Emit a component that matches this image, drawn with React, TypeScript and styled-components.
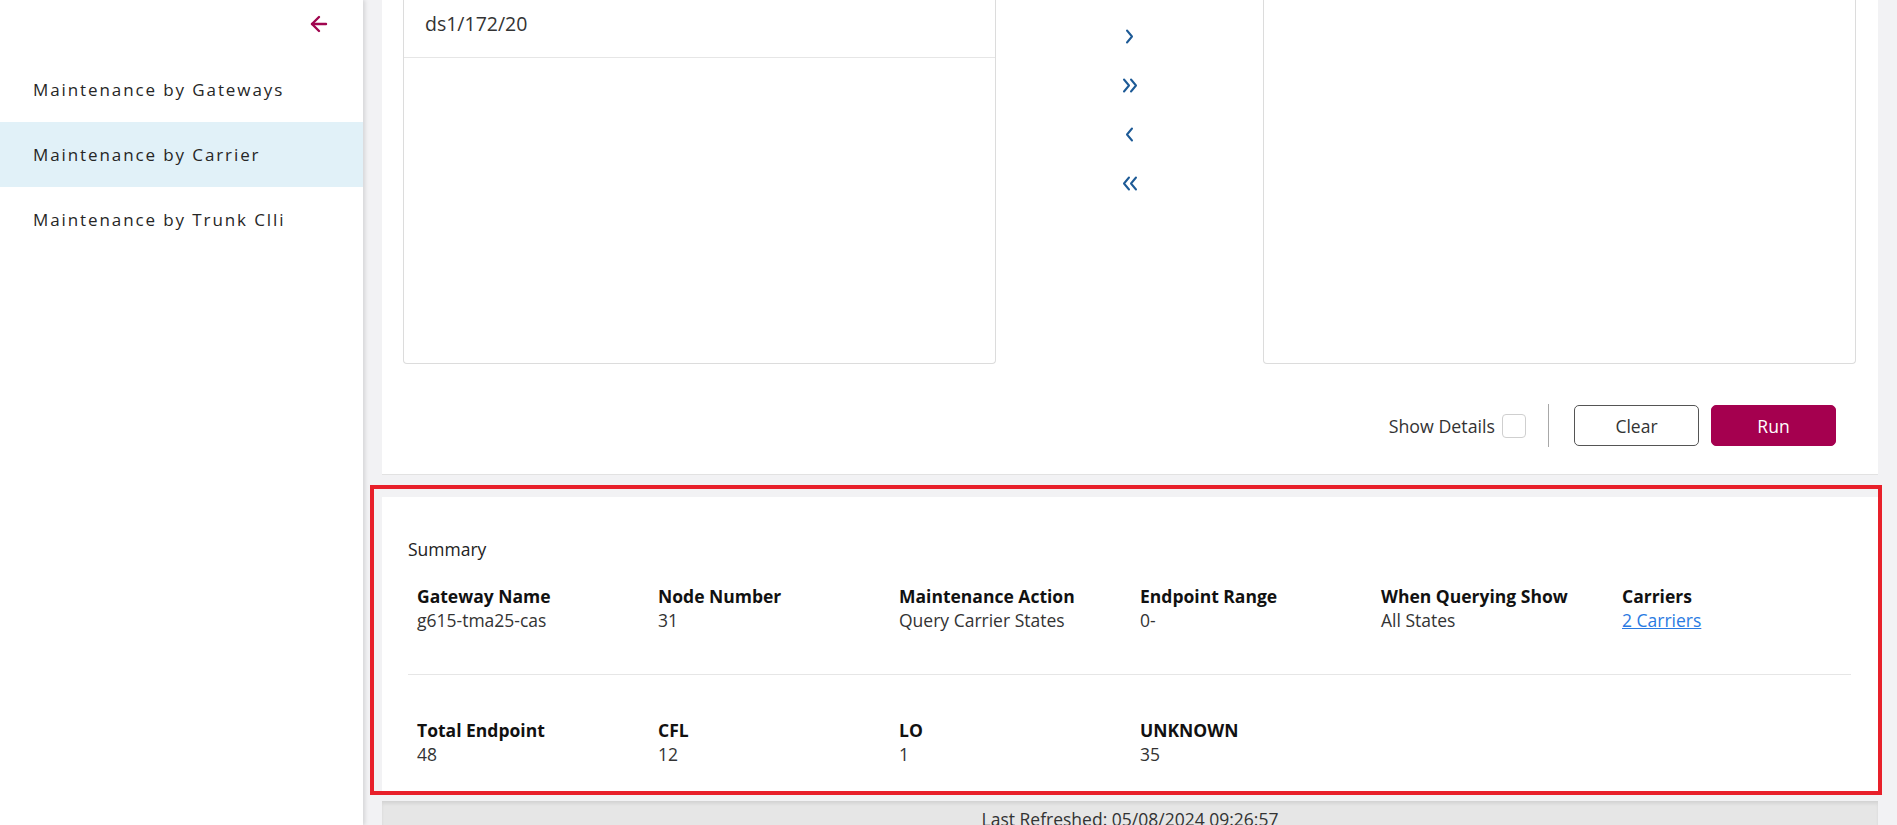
import React from 'react';
import styled, { createGlobalStyle } from 'styled-components';
import { ArrowLeft } from 'lucide-react';

const GlobalStyle = createGlobalStyle`
    html, body {
        margin: 0;
        padding: 0;
    }

    body {
        font-family: "Open Sans", "Liberation Sans", sans-serif;
        color: #333;
        overflow: hidden;
    }

    * {
        box-sizing: border-box;
    }
`;

const Shell = styled.div`
    display: flex;
    width: 1897px;
    height: 825px;
    overflow: hidden;
`;

const Sidebar = styled.aside`
    width: 363px;
    flex-shrink: 0;
    background: #fff;
    box-shadow: 2px 0 4px rgba(0, 0, 0, 0.12);
    z-index: 1;
`;

const BackRow = styled.div`
    height: 57px;
    display: flex;
    justify-content: flex-end;
    align-items: flex-start;
    padding: 12px 32px 0 0;
    color: #a0064f;
`;

const MenuItem = styled.div<{ $active?: boolean }>`
    height: 65px;
    display: flex;
    align-items: center;
    padding-left: 33px;
    font-size: 17px;
    letter-spacing: 1.9px;
    color: #262626;
    background: ${(p) => (p.$active ? '#e1f1f8' : 'transparent')};
`;

const Main = styled.main`
    flex: 1;
    min-width: 0;
    display: flex;
    flex-direction: column;
    padding: 0 19px;
    background: #f2f2f4;
`;

const TopCard = styled.section`
    flex-shrink: 0;
    height: 475px;
    padding: 0 22px 0 21px;
    background: #fff;
    border-bottom: 1px solid #e2e2e2;
`;

const Transfer = styled.div`
    display: flex;
    height: 364px;
`;

const ListBox = styled.div`
    width: 593px;
    background: #fff;
    border: 1px solid #dcdcdc;
    border-top: none;
    border-radius: 0 0 4px 4px;
`;

const ListItem = styled.div`
    height: 58px;
    padding: 10px 0 0 21px;
    font-size: 19.5px;
    line-height: 28px;
    color: #333;
    border-bottom: 1px solid #e6e6e6;
`;

const MoveColumn = styled.div`
    flex: 1;
    display: flex;
    flex-direction: column;
    align-items: center;
    padding-top: 12px;
`;

const MoveButton = styled.button`
    height: 49px;
    width: 40px;
    display: flex;
    align-items: center;
    justify-content: center;
    border: none;
    background: none;
    padding: 0;
    color: #1d5a96;
    cursor: pointer;
`;

const ActionRow = styled.div`
    height: 41px;
    margin-top: 41px;
    padding-right: 20px;
    display: flex;
    justify-content: flex-end;
    align-items: center;
`;

const CheckLabel = styled.label`
    display: flex;
    align-items: center;
    gap: 7px;
    font-size: 17.8px;
    color: #333;
`;

const CheckBox = styled.span`
    width: 24px;
    height: 24px;
    border: 1px solid #cfcfcf;
    border-radius: 4px;
    background: #fff;
`;

const Divider = styled.span`
    width: 1px;
    height: 43px;
    margin: 0 25px 0 22px;
    background: #a8a8a8;
`;

const Button = styled.button<{ $primary?: boolean }>`
    width: 125px;
    height: 41px;
    margin-left: ${(p) => (p.$primary ? '12px' : '0')};
    border-radius: 5px;
    font-family: inherit;
    font-size: 17.5px;
    color: ${(p) => (p.$primary ? '#fff' : '#333')};
    background: ${(p) => (p.$primary ? '#a5004f' : '#fff')};
    border: 1px solid ${(p) => (p.$primary ? '#a5004f' : '#555')};
`;

const Annotated = styled.div`
    margin: 10px -4px 0 -12px;
    padding: 8px 0 0 8px;
    border: 4px solid #e8202a;
`;

const SummaryCard = styled.section`
    height: 294px;
    padding: 40px 27px 0 26px;
    background: #fff;
`;

const SummaryTitle = styled.div`
    font-size: 17.5px;
    line-height: 24px;
    color: #222;
    margin-bottom: 23px;
`;

const FieldGrid = styled.div`
    display: grid;
    grid-template-columns: repeat(6, 241px);
    padding-left: 9px;
`;

const Label = styled.div`
    font-size: 17.5px;
    font-weight: 700;
    line-height: 24px;
    color: #111;
`;

const Value = styled.div`
    font-size: 17.5px;
    line-height: 25px;
    color: #333;
`;

const ValueLink = styled.a`
    color: #2a7ae2;
    text-decoration: underline;
`;

const Separator = styled.hr`
    height: 1px;
    margin: 41px 0 43px;
    border: none;
    background: #e6e6e6;
`;

const Footer = styled.footer`
    flex: 1;
    margin-top: 6px;
    padding-top: 5px;
    text-align: center;
    font-size: 17.5px;
    line-height: 24px;
    color: #333;
    background: #e6e6e6;
    border-top: 1px solid #d4d4d4;
    box-shadow: inset 0 2px 3px rgba(0, 0, 0, 0.07);
`;

const Chevron = ({ dir, double }: { dir: 'left' | 'right'; double?: boolean }) => {
    const one = dir === 'right' ? '2,1.5 7,7.5 2,13.5' : '7,1.5 2,7.5 7,13.5';
    const width = double ? 16 : 9;
    return (
        <svg width={width} height="15" viewBox={`0 0 ${width} 15`} fill="none" stroke="currentColor" strokeWidth="2" strokeLinecap="round" strokeLinejoin="round">
            <polyline points={one} />
            {double && <polyline points={one} transform="translate(7 0)" />}
        </svg>
    );
};

const topFields = [
    { label: 'Gateway Name', value: 'g615-tma25-cas' },
    { label: 'Node Number', value: '31' },
    { label: 'Maintenance Action', value: 'Query Carrier States' },
    { label: 'Endpoint Range', value: '0-' },
    { label: 'When Querying Show', value: 'All States' },
    { label: 'Carriers', value: '2 Carriers', link: true },
];

const countFields = [
    { label: 'Total Endpoint', value: '48' },
    { label: 'CFL', value: '12' },
    { label: 'LO', value: '1' },
    { label: 'UNKNOWN', value: '35' },
];

type Field = { label: string; value: string; link?: boolean };

const Fields = ({ items }: { items: Field[] }) => (
    <FieldGrid>
        {items.map((f) => (
            <div key={f.label}>
                <Label>{f.label}</Label>
                <Value>{f.link ? <ValueLink href="#">{f.value}</ValueLink> : f.value}</Value>
            </div>
        ))}
    </FieldGrid>
);

const App = () => {
    return (
        <Shell>
            <GlobalStyle />
            <Sidebar>
                <BackRow>
                    <ArrowLeft size={24} strokeWidth={2.4} />
                </BackRow>
                <MenuItem>Maintenance by Gateways</MenuItem>
                <MenuItem $active>Maintenance by Carrier</MenuItem>
                <MenuItem>Maintenance by Trunk Clli</MenuItem>
            </Sidebar>
            <Main>
                <TopCard>
                    <Transfer>
                        <ListBox>
                            <ListItem>ds1/172/20</ListItem>
                        </ListBox>
                        <MoveColumn>
                            <MoveButton><Chevron dir="right" /></MoveButton>
                            <MoveButton><Chevron dir="right" double /></MoveButton>
                            <MoveButton><Chevron dir="left" /></MoveButton>
                            <MoveButton><Chevron dir="left" double /></MoveButton>
                        </MoveColumn>
                        <ListBox />
                    </Transfer>
                    <ActionRow>
                        <CheckLabel>
                            Show Details
                            <CheckBox />
                        </CheckLabel>
                        <Divider />
                        <Button>Clear</Button>
                        <Button $primary>Run</Button>
                    </ActionRow>
                </TopCard>
                <Annotated>
                    <SummaryCard>
                        <SummaryTitle>Summary</SummaryTitle>
                        <Fields items={topFields} />
                        <Separator />
                        <Fields items={countFields} />
                    </SummaryCard>
                </Annotated>
                <Footer>Last Refreshed: 05/08/2024 09:26:57</Footer>
            </Main>
        </Shell>
    );
};

export default App;
